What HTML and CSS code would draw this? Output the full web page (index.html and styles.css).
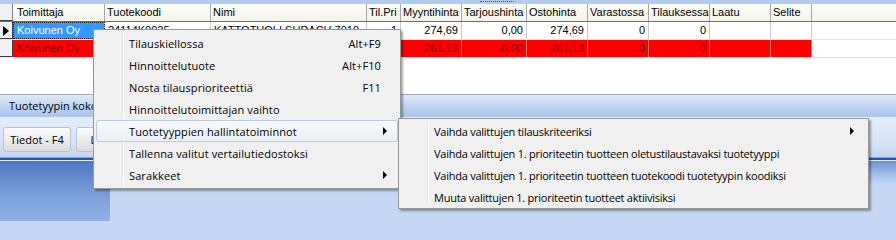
FILE: index.html
```html
<!DOCTYPE html>
<html>
<head>
<meta charset="utf-8">
<link rel="stylesheet" href="styles.css">
</head>
<body>
<div class="app">
  <div class="topstrip"><span class="grip"></span></div>
  <div class="grid">
    <div class="row head">
      <div class="c ind"></div>
      <div class="c">Toimittaja</div>
      <div class="c">Tuotekoodi</div>
      <div class="c">Nimi</div>
      <div class="c">Til.Pri</div>
      <div class="c">Myyntihinta</div>
      <div class="c">Tarjoushinta</div>
      <div class="c">Ostohinta</div>
      <div class="c">Varastossa</div>
      <div class="c">Tilauksessa</div>
      <div class="c">Laatu</div>
      <div class="c">Selite</div>
    </div>
    <div class="row data">
      <div class="c ind"><span class="pointer"></span></div>
      <div class="c sel">Koivunen Oy</div>
      <div class="c">24114K0025</div>
      <div class="c">KATTOTUOLI SUDACH 7010</div>
      <div class="c num">1</div>
      <div class="c num">274,69</div>
      <div class="c num">0,00</div>
      <div class="c num">274,69</div>
      <div class="c num">0</div>
      <div class="c num">0</div>
      <div class="c"></div>
      <div class="c"></div>
    </div>
    <div class="row data red">
      <div class="c ind"></div>
      <div class="c">Koivunen Oy</div>
      <div class="c">24114K0026</div>
      <div class="c">KATTOTUOLI SUDACH 7011</div>
      <div class="c num">2</div>
      <div class="c num">261,13</div>
      <div class="c num">0,00</div>
      <div class="c num">261,13</div>
      <div class="c num">0</div>
      <div class="c num">0</div>
      <div class="c"></div>
      <div class="c"></div>
    </div>
  </div>
  <div class="labelbar">Tuotetyypin kokonaisuudet</div>
  <div class="buttonbar">
    <button class="btn">Tiedot - F4</button>
    <button class="btn">Lisää - F5</button>
  </div>
  <div class="divider"></div>
  <div class="bottom">
    <div class="leftpanel"></div>
    <div class="rightpanel"></div>
  </div>
</div>

<div class="menu main">
  <div class="gutter"></div>
  <div class="item"><span class="lbl">Tilauskiellossa</span><span class="key">Alt+F9</span></div>
  <div class="item"><span class="lbl">Hinnoittelutuote</span><span class="key">Alt+F10</span></div>
  <div class="item"><span class="lbl">Nosta tilausprioriteettiä</span><span class="key">F11</span></div>
  <div class="item"><span class="lbl">Hinnoittelutoimittajan vaihto</span></div>
  <div class="item hot"><span class="lbl">Tuotetyyppien hallintatoiminnot</span><span class="arrow"></span></div>
  <div class="item"><span class="lbl">Tallenna valitut vertailutiedostoksi</span></div>
  <div class="item"><span class="lbl">Sarakkeet</span><span class="arrow"></span></div>
</div>

<div class="menu sub">
  <div class="gutter"></div>
  <div class="item"><span class="lbl">Vaihda valittujen tilauskriteeriksi</span><span class="arrow"></span></div>
  <div class="item"><span class="lbl">Vaihda valittujen 1. prioriteetin tuotteen oletustilaustavaksi tuotetyyppi</span></div>
  <div class="item"><span class="lbl">Vaihda valittujen 1. prioriteetin tuotteen tuotekoodi tuotetyypin koodiksi</span></div>
  <div class="item"><span class="lbl">Muuta valittujen 1. prioriteetin tuotteet aktiivisiksi</span></div>
</div>
</body>
</html>
```

FILE: styles.css
```css
* { box-sizing: border-box; }
html, body { margin: 0; padding: 0; }
body {
  width: 896px;
  height: 221px;
  overflow: hidden;
  position: relative;
  background: #c4d8f4;
}
.app {
  display: flex;
  flex-direction: column;
  height: 221px;
}
.topstrip {
  height: 4px;
  background: #b3cbec;
  position: relative;
}
.grip {
  position: absolute;
  left: 480px;
  top: 0;
  width: 34px;
  height: 2px;
  border-bottom: 1px dotted #3a5a8a;
}
.grid {
  height: 91px;
  background: #ffffff;
  border-bottom: 1px solid #a0a8b4;
  font-family: "Liberation Sans", Arial, sans-serif;
  font-size: 11px;
}
.row {
  display: grid;
  grid-template-columns: 13px 92px 106px 156px 34px 61px 65px 61px 61px 61px 61px 41px 1fr;
  height: 18px;
}
.c {
  border-right: 1px solid #c8c8c8;
  padding: 0 3px;
  line-height: 17px;
  white-space: nowrap;
  overflow: hidden;
}
.head {
  background: linear-gradient(#fdfdf8, #f4f3ea);
  border-bottom: 1px solid #6e6e6e;
}
.head .c {
  border-right: 1px solid #a7a7a7;
  padding-left: 2px;
  line-height: 17px;
  color: #000;
}
.head .c:nth-child(2) { padding-left: 4px; }
.data { border-bottom: 1px solid #e4e4e4; color: #000; }
.num { text-align: right; }
.ind {
  background: #f0f0f0;
  border-right: 1px solid #404040;
  border-bottom: 1px solid #404040;
  padding: 0;
  position: relative;
}
.head .ind { border-right: 1px solid #808080; }
.pointer {
  position: absolute;
  left: 3px;
  top: 4px;
  width: 0;
  height: 0;
  border-top: 5px solid transparent;
  border-bottom: 5px solid transparent;
  border-left: 6px solid #000;
}
.sel {
  background: #3399ff;
  color: #ffffff;
  outline: 1px dotted #222;
  outline-offset: -1px;
  padding-left: 4px;
}
.red .c:not(.ind) { background: #ff0000; color: #8a0000; border-right-color: #e87070; }
.red .c:nth-child(2) { padding-left: 4px; }

.labelbar {
  height: 22px;
  background: linear-gradient(#dde9f9, #b6cdef 70%, #a9c4ec);
  font-family: "Open Sans", sans-serif;
  font-size: 11px;
  line-height: 21px;
  padding-left: 9px;
  color: #000;
}
.buttonbar {
  height: 40px;
  background: linear-gradient(#e4edf9, #d6e4f6 60%, #c2d6f1);
  display: flex;
  gap: 5px;
  padding: 10px 0 0 3px;
}
.btn {
  height: 25px;
  width: 68px;
  border: 1px solid #b9c3cf;
  border-radius: 3px;
  background: linear-gradient(#fbfbfb, #ececec 50%, #dcdcdc);
  font-family: "Open Sans", sans-serif;
  font-size: 11px;
  padding: 0;
  color: #000;
  text-align: center;
}
.btn + .btn { width: 76px; }
.divider {
  height: 4px;
  border-top: 1px solid #7d9fd6;
  background: #2b58a6;
  border-bottom: 1px solid #e3ecfa;
}
.bottom {
  flex: 1;
  display: flex;
}
.leftpanel {
  width: 110px;
  background: linear-gradient(#4e77c0, #7ea2dc 60%, #8fb1e6);
}
.rightpanel {
  flex: 1;
  background: linear-gradient(#6d93d2, #a8c3ec 25%, #c4d8f4 40%);
}

.menu {
  position: absolute;
  background: #f0f0f0;
  border: 1px solid #979797;
  box-shadow: 2px 2px 2px rgba(0,0,0,0.35);
  font-family: "Open Sans", sans-serif;
  font-size: 11px;
  color: #000;
  padding: 2px;
}
.menu.main { left: 93px; top: 29px; width: 308px; height: 160px; letter-spacing: 0.1px; }
.menu.sub { left: 398px; top: 118px; width: 471px; height: 91px; padding-top: 1px; letter-spacing: -0.25px; }
.gutter {
  position: absolute;
  left: 28px;
  top: 2px;
  bottom: 2px;
  width: 2px;
  border-left: 1px solid #e2e3e3;
  border-right: 1px solid #ffffff;
}
.item {
  position: relative;
  height: 22px;
  display: flex;
  align-items: center;
  padding-left: 32px;
  padding-right: 16px;
  border: 1px solid transparent;
  border-radius: 3px;
}
.item .lbl { flex: 1; white-space: nowrap; }
.item.hot {
  border-color: #b6cbe4;
  background: linear-gradient(#f7f9fc, #eaf0f7);
}
.arrow {
  width: 0;
  height: 0;
  border-top: 4px solid transparent;
  border-bottom: 4px solid transparent;
  border-left: 4px solid #000;
  margin-right: -6px;
}
.sub .arrow { margin-right: -5px; }
```
